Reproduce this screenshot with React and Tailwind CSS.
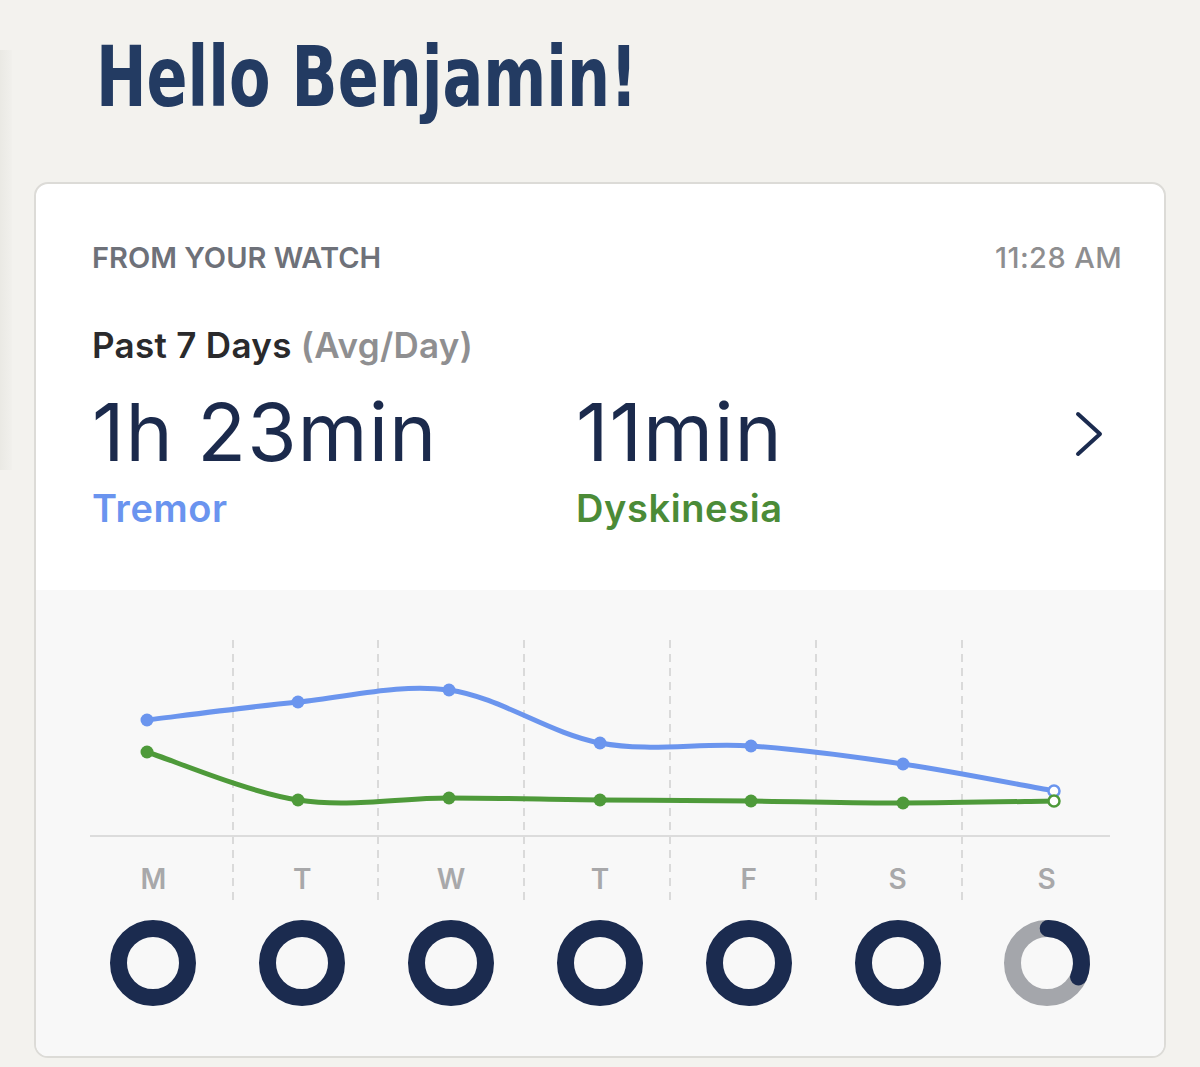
import React from 'react';

const days = ['M', 'T', 'W', 'T', 'F', 'S', 'S'];

// chart coordinates, relative to the 1020x276 svg
const xs = [57, 208, 359, 510, 661, 813, 964];
const tremor = [90, 72, 60, 113, 116, 134, 161];
const dysk = [122, 170, 168, 170, 171, 173, 171];
const gridX = [143, 288, 434, 580, 726, 872];

function smoothPath(ys) {
  const pts = xs.map((x, i) => [x, ys[i]]);
  let d = `M${pts[0][0]},${pts[0][1]}`;
  for (let i = 0; i < pts.length - 1; i++) {
    const p0 = pts[i - 1] || pts[i];
    const p1 = pts[i];
    const p2 = pts[i + 1];
    const p3 = pts[i + 2] || p2;
    const c1x = p1[0] + (p2[0] - p0[0]) / 6;
    const c1y = p1[1] + (p2[1] - p0[1]) / 6;
    const c2x = p2[0] - (p3[0] - p1[0]) / 6;
    const c2y = p2[1] - (p3[1] - p1[1]) / 6;
    d += ` C${c1x},${c1y} ${c2x},${c2y} ${p2[0]},${p2[1]}`;
  }
  return d;
}

function Series({ ys, color }) {
  return (
    <g>
      <path d={smoothPath(ys)} fill="none" stroke={color} strokeWidth="5" strokeLinecap="round" />
      {xs.map((x, i) =>
        i === xs.length - 1 ? (
          <circle key={i} cx={x} cy={ys[i]} r="5.5" fill="#fff" stroke={color} strokeWidth="2.5" />
        ) : (
          <circle key={i} cx={x} cy={ys[i]} r="6.5" fill={color} />
        )
      )}
    </g>
  );
}

function Ring({ progress = 1 }) {
  const r = 34.5;
  const c = 2 * Math.PI * r;
  if (progress >= 1) {
    return (
      <svg width="88" height="88" viewBox="0 0 88 88">
        <circle cx="44" cy="44" r={r} fill="none" stroke="#1b2b4f" strokeWidth="17" />
      </svg>
    );
  }
  return (
    <svg width="88" height="88" viewBox="0 0 88 88">
      <circle cx="44" cy="44" r={r} fill="none" stroke="#a4a6ab" strokeWidth="17" />
      <circle
        cx="44"
        cy="44"
        r={r}
        fill="none"
        stroke="#1b2b4f"
        strokeWidth="17"
        strokeLinecap="round"
        strokeDasharray={`${c * progress} ${c}`}
        transform="rotate(-88 44 44)"
      />
    </svg>
  );
}

export default function App() {
  return (
    <div className="min-h-screen bg-[#f3f2ee] flex" style={{ fontFamily: 'Inter, "Noto Sans", sans-serif' }}>
      {/* faint edge of a side panel */}
      <div className="w-[12px] h-[420px] mt-[50px] shrink-0 bg-gradient-to-r from-[#eae9e4] to-[#f1f0ec]" />

      <div className="flex-1 pl-[22px] pr-[34px]">
        <h1
          className="pt-[35px] pl-[62px] text-[84px] leading-[84px] font-bold text-[#233b62] whitespace-nowrap"
          style={{ fontFamily: '"DejaVu Sans Condensed", "Liberation Sans", sans-serif' }}
        >
          <span className="inline-block origin-left scale-x-[0.8]">Hello Benjamin!</span>
        </h1>

        <div className="mt-[63px] w-[1132px] border-2 border-[#dcdbd7] rounded-[14px] bg-white overflow-hidden">
          {/* summary */}
          <div className="pt-[57px] pl-[56px] pr-[42px] pb-[60px]">
            <div className="flex items-baseline justify-between">
              <span className="text-[29px] leading-[34px] font-semibold text-[#6e7179]">
                FROM YOUR WATCH
              </span>
              <span className="text-[29px] leading-[34px] font-medium text-[#8e8e90] tracking-[0.4px]">11:28 AM</span>
            </div>

            <div className="mt-[50px] text-[35px] leading-[40px] font-semibold text-[#2a2a2c] tracking-[0.3px]">
              Past 7 Days <span className="text-[#8f8f91]">(Avg/Day)</span>
            </div>

            <div className="mt-[27px] flex items-start">
              <div className="w-[484px]">
                <div className="text-[80px] leading-[80px] text-[#1b2a4c] tracking-[1px]">1h 23min</div>
                <div className="mt-[14px] text-[38px] leading-[44px] font-semibold text-[#6a94ef] tracking-[0.6px]">Tremor</div>
              </div>
              <div className="flex-1">
                <div className="text-[80px] leading-[80px] text-[#1b2a4c] tracking-[1px]">11min</div>
                <div className="mt-[14px] text-[38px] leading-[44px] font-semibold text-[#4b8b37] tracking-[0.6px]">Dyskinesia</div>
              </div>
              <svg width="30" height="48" viewBox="0 0 30 48" className="mt-[18px] mr-[18px]">
                <polyline
                  points="4,4 26,24 4,44"
                  fill="none"
                  stroke="#1b2b4f"
                  strokeWidth="4"
                  strokeLinecap="round"
                  strokeLinejoin="round"
                />
              </svg>
            </div>
          </div>

          {/* weekly chart */}
          <div className="bg-[#f8f8f8] pt-[40px] pb-[49px]">
            <svg width="1020" height="276" viewBox="0 0 1020 276" className="ml-[54px] block">
              {gridX.map((x) => (
                <line key={x} x1={x} y1="10" x2={x} y2="276" stroke="#dadada" strokeWidth="2" strokeDasharray="8 6" />
              ))}
              <line x1="0" y1="206" x2="1020" y2="206" stroke="#dcdcdc" strokeWidth="2" />
              <Series ys={tremor} color="#6b95ee" />
              <Series ys={dysk} color="#4e9a3a" />
            </svg>

            <div className="-mt-[44px] ml-[43px] w-[1042px] grid grid-cols-7">
              {days.map((d, i) => (
                <div key={i} className="flex flex-col items-center">
                  <span className="text-[28px] leading-[34px] font-semibold text-[#a8a8aa]">{d}</span>
                  <div className="mt-[23px]">
                    <Ring progress={i === 6 ? 0.31 : 1} />
                  </div>
                </div>
              ))}
            </div>
          </div>
        </div>
      </div>
    </div>
  );
}
